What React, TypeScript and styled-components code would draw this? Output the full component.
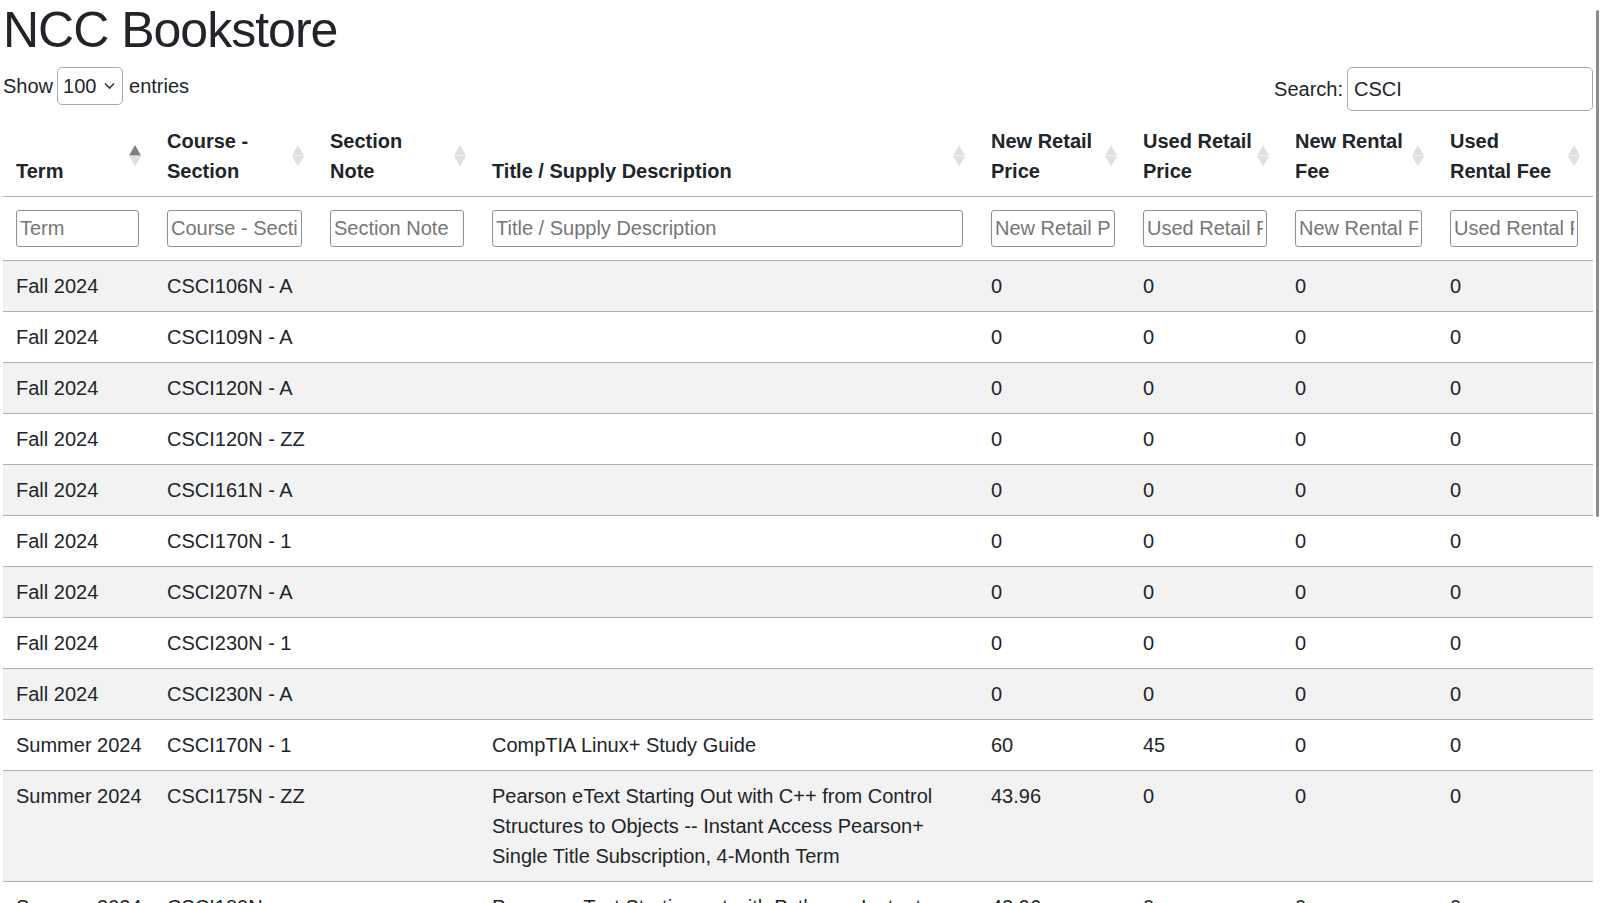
import React from "react";
import styled, { createGlobalStyle } from "styled-components";

const GlobalStyle = createGlobalStyle`
  html { overflow: hidden; }
  body {
    margin: 0;
    background: #ffffff;
    color: #212529;
    font-family: "Segoe UI", "Liberation Sans", Arial, sans-serif;
    font-size: 20px;
    line-height: 30px;
  }
  * { box-sizing: border-box; }
`;

const Page = styled.div`
  padding: 0 8px 0 3px;
`;

const Title = styled.h1`
  margin: 0;
  font-size: 50px;
  line-height: 60px;
  font-weight: 400;
  letter-spacing: -1px;
`;

const Controls = styled.div`
  display: flex;
  justify-content: space-between;
  align-items: flex-start;
  margin-top: 7px;
  width: 1590px;
`;

const ControlLabel = styled.label`
  display: flex;
  align-items: center;
  white-space: nowrap;
`;

const SelectWrap = styled.span`
  position: relative;
  display: inline-block;
  margin: 0 6px 0 4px;
`;

const Select = styled.select`
  appearance: none;
  width: 66px;
  height: 38px;
  padding: 0 20px 0 5px;
  border: 1px solid #a9a9a9;
  border-radius: 5px;
  background: #fff;
  color: #212529;
  font: inherit;
  line-height: 36px;
`;

const Chevron = styled.svg`
  position: absolute;
  right: 8px;
  top: 50%;
  transform: translateY(-50%);
  pointer-events: none;
`;

const SearchInput = styled.input`
  width: 246px;
  height: 44px;
  margin-left: 4px;
  padding: 0 6px;
  border: 1px solid #a9a9a9;
  border-radius: 5px;
  color: #212529;
  font: inherit;
  outline: none;
`;

const Table = styled.table`
  width: 1590px;
  margin-top: 5px;
  border-collapse: collapse;
  table-layout: fixed;
`;

const HeaderCell = styled.th`
  position: relative;
  padding: 10px 29px 10px 13px;
  text-align: left;
  vertical-align: bottom;
  font-weight: 700;
  line-height: 30px;
  border-bottom: 1px solid #b0b0b0;
`;

const SortIcon = styled.svg`
  position: absolute;
  right: 13px;
  top: 50%;
  transform: translateY(-50%);
`;

const FilterCell = styled.th`
  padding: 13px 13px 13px 13px;
  text-align: left;
  font-weight: 400;
  border-bottom: 1px solid #b0b0b0;
`;

const FilterInput = styled.input`
  display: block;
  width: calc(100% - 2px);
  height: 37px;
  padding: 1px 3px;
  border: 1px solid #8f8f9d;
  border-radius: 3px;
  font: inherit;
  color: #212529;
  outline: none;
  &::placeholder {
    color: #767676;
  }
`;

const Row = styled.tr<{ $striped: boolean }>`
  background: ${(p) => (p.$striped ? "#f2f2f2" : "#ffffff")};
`;

const Cell = styled.td<{ $wrap?: boolean }>`
  padding: 10px 13px;
  vertical-align: top;
  line-height: 30px;
  white-space: ${(p) => (p.$wrap ? "normal" : "nowrap")};
  border-bottom: 1px solid #b0b0b0;
`;

const ScrollThumb = styled.div`
  position: fixed;
  top: 10px;
  right: 2px;
  width: 3px;
  height: 507px;
  background: #8c8c8c;
  border-radius: 2px;
`;

type Col = { label: string; width: number; sort: "asc" | "none" };

const columns: Col[] = [
  { label: "Term", width: 151, sort: "asc" },
  { label: "Course - Section", width: 163, sort: "none" },
  { label: "Section Note", width: 162, sort: "none" },
  { label: "Title / Supply Description", width: 499, sort: "none" },
  { label: "New Retail Price", width: 152, sort: "none" },
  { label: "Used Retail Price", width: 152, sort: "none" },
  { label: "New Rental Fee", width: 155, sort: "none" },
  { label: "Used Rental Fee", width: 156, sort: "none" },
];

type Item = {
  term: string;
  course: string;
  note: string;
  title: string;
  newRetail: string;
  usedRetail: string;
  newRental: string;
  usedRental: string;
};

const mk = (
  term: string,
  course: string,
  title = "",
  newRetail = "0",
  usedRetail = "0"
): Item => ({
  term,
  course,
  note: "",
  title,
  newRetail,
  usedRetail,
  newRental: "0",
  usedRental: "0",
});

const rows: Item[] = [
  mk("Fall 2024", "CSCI106N - A"),
  mk("Fall 2024", "CSCI109N - A"),
  mk("Fall 2024", "CSCI120N - A"),
  mk("Fall 2024", "CSCI120N - ZZ"),
  mk("Fall 2024", "CSCI161N - A"),
  mk("Fall 2024", "CSCI170N - 1"),
  mk("Fall 2024", "CSCI207N - A"),
  mk("Fall 2024", "CSCI230N - 1"),
  mk("Fall 2024", "CSCI230N - A"),
  mk("Summer 2024", "CSCI170N - 1", "CompTIA Linux+ Study Guide", "60", "45"),
  mk(
    "Summer 2024",
    "CSCI175N - ZZ",
    "Pearson eText Starting Out with C++ from Control Structures to Objects -- Instant Access Pearson+ Single Title Subscription, 4-Month Term",
    "43.96"
  ),
  mk(
    "Summer 2024",
    "CSCI180N",
    "Pearson eText Starting out with Python -- Instant Access Pearson+ Single Title Subscription, 4-Month Term",
    "43.96"
  ),
];

const Sort = ({ dir }: { dir: "asc" | "none" }) => (
  <SortIcon width="12" height="22" viewBox="0 0 12 22">
    <polygon points="6,0 12,10.5 0,10.5" fill={dir === "asc" ? "#7d7f82" : "#dfe0e1"} />
    <polygon points="0,11 12,11 6,21.5" fill="#dfe0e1" />
  </SortIcon>
);

export default function App() {
  return (
    <>
      <GlobalStyle />
      <Page>
        <Title>NCC Bookstore</Title>
        <Controls>
          <ControlLabel>
            Show
            <SelectWrap>
              <Select defaultValue="100">
                <option value="10">10</option>
                <option value="25">25</option>
                <option value="50">50</option>
                <option value="100">100</option>
              </Select>
              <Chevron width="11" height="7" viewBox="0 0 11 7">
                <path d="M1 1l4.5 4.5L10 1" fill="none" stroke="#343a40" strokeWidth="1.6" />
              </Chevron>
            </SelectWrap>
            entries
          </ControlLabel>
          <ControlLabel>
            Search:
            <SearchInput defaultValue="CSCI" />
          </ControlLabel>
        </Controls>
        <Table>
          <colgroup>
            {columns.map((c) => (
              <col key={c.label} style={{ width: c.width }} />
            ))}
          </colgroup>
          <thead>
            <tr>
              {columns.map((c) => (
                <HeaderCell key={c.label}>
                  {c.label}
                  <Sort dir={c.sort} />
                </HeaderCell>
              ))}
            </tr>
            <tr>
              {columns.map((c) => (
                <FilterCell key={c.label}>
                  <FilterInput placeholder={c.label} />
                </FilterCell>
              ))}
            </tr>
          </thead>
          <tbody>
            {rows.map((r, i) => (
              <Row key={i} $striped={i % 2 === 0}>
                <Cell>{r.term}</Cell>
                <Cell>{r.course}</Cell>
                <Cell>{r.note}</Cell>
                <Cell $wrap>{r.title}</Cell>
                <Cell>{r.newRetail}</Cell>
                <Cell>{r.usedRetail}</Cell>
                <Cell>{r.newRental}</Cell>
                <Cell>{r.usedRental}</Cell>
              </Row>
            ))}
          </tbody>
        </Table>
        <ScrollThumb />
      </Page>
    </>
  );
}
